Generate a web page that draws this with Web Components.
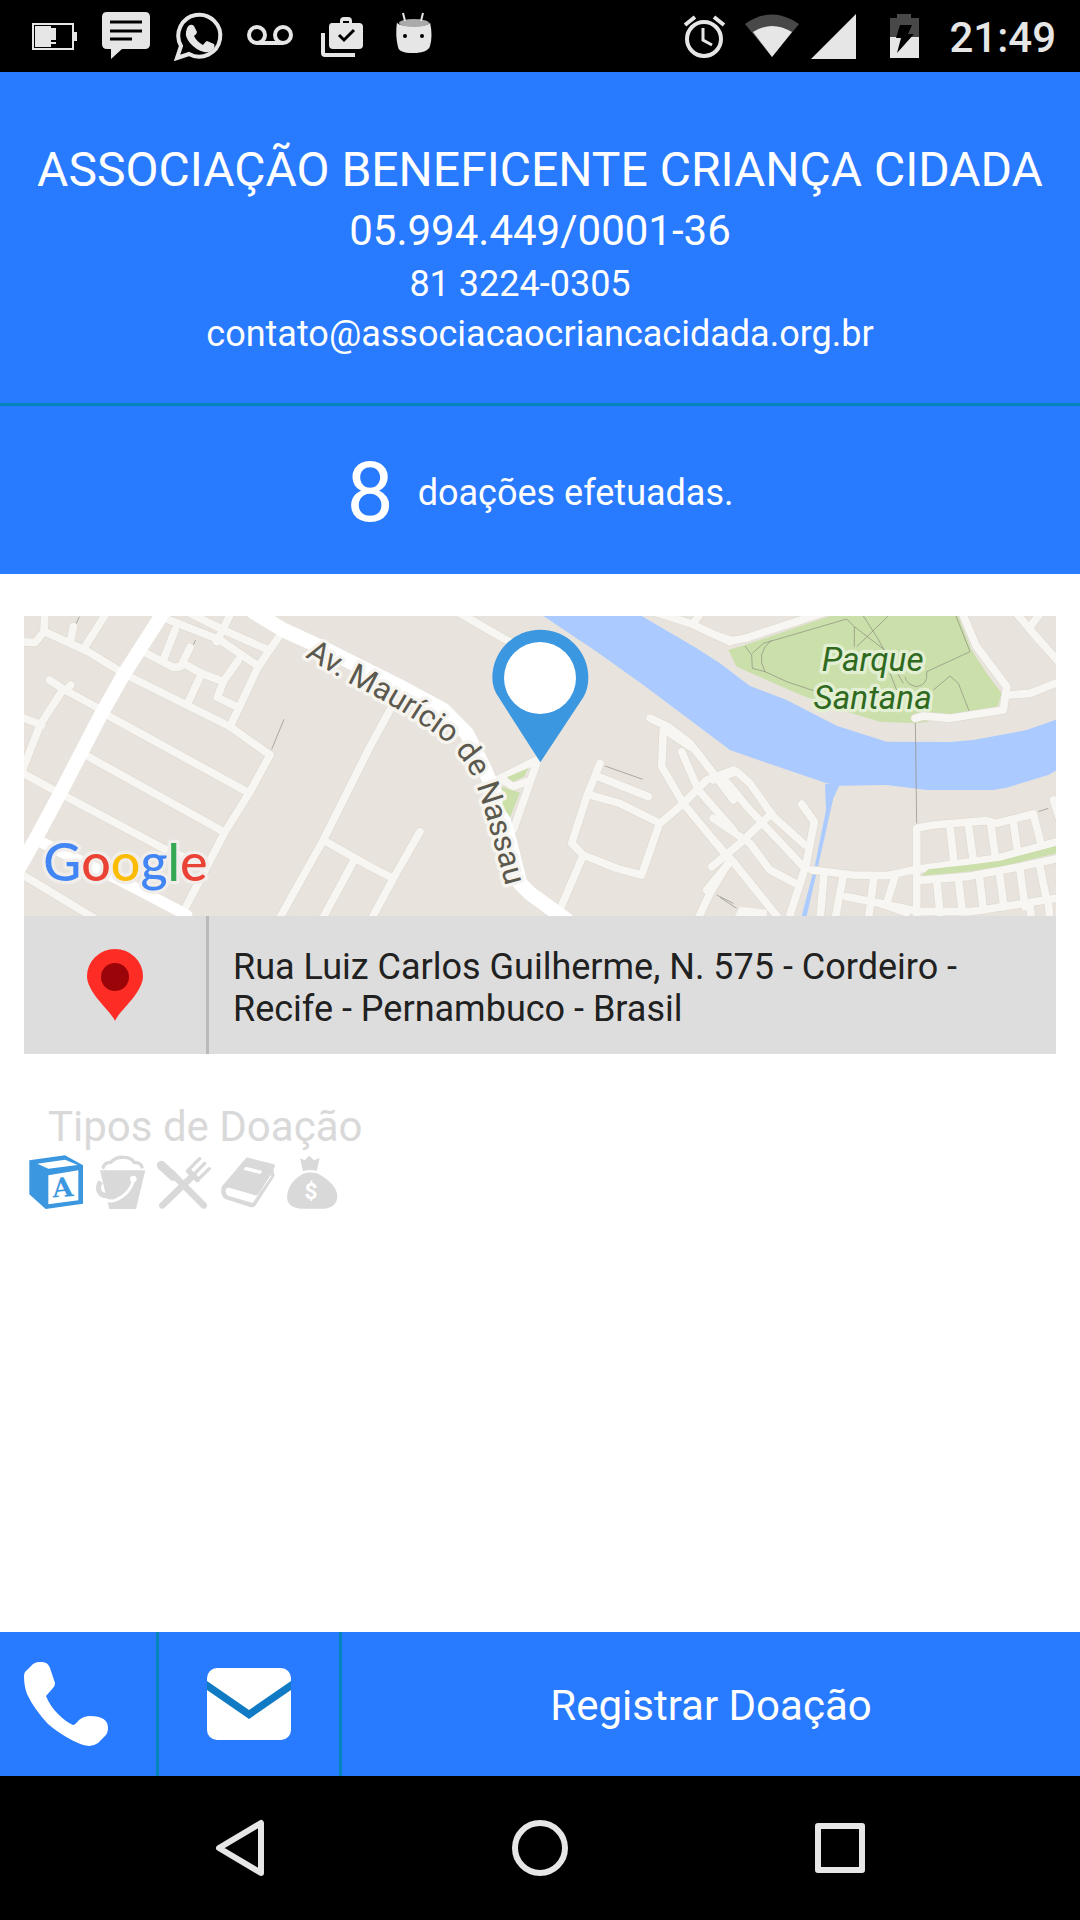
<!DOCTYPE html>
<html lang="pt-BR">
<head>
<meta charset="utf-8">
<meta name="viewport" content="width=device-width, initial-scale=1">
<title>Associação Beneficente Criança Cidada</title>
<style>
  :root {
    --blue: #287aff;
    --line: #0583bb;
    --accent: #3b97e0;
    --muted: #d9d9d9;
    --icon: #e6e6e6;
  }
  body {
    margin: 0;
    background: #fff;
    font-family: Roboto, sans-serif;
    font-size: 36px;
    line-height: 42px;
    color: #212121;
  }
</style>
</head>
<body>
<app-screen>
  <status-bar slot="top">21:49</status-bar>
  <org-header slot="top">
    <span slot="name">ASSOCIAÇÃO BENEFICENTE CRIANÇA CIDADA</span>
    <span slot="code">05.994.449/0001-36</span>
    <span slot="phone">81 3224-0305</span>
    <span slot="mail">contato@associacaocriancacidada.org.br</span>
  </org-header>
  <donation-count slot="top" value="8">doações efetuadas.</donation-count>
  <place-card>
    <place-map></place-map>
    <span slot="address">Rua Luiz Carlos Guilherme, N. 575 - Cordeiro - Recife - Pernambuco - Brasil</span>
  </place-card>
  <donation-types>Tipos de Doação</donation-types>
  <action-bar slot="bottom">Registrar Doação</action-bar>
  <nav-bar slot="bottom"></nav-bar>
</app-screen>

<script>
// every element here only needs a shadow root filled from a string
function define(name, html, setup) {
  const template = document.createElement('template');
  template.innerHTML = html;
  customElements.define(name, class extends HTMLElement {
    constructor() {
      super();
      this._shadowRoot = this.attachShadow({ mode: 'open' });
      this._shadowRoot.appendChild(template.content.cloneNode(true));
      if (setup) setup(this, this._shadowRoot);
    }
  });
}

define('app-screen', `
  <style>
    :host { display: flex; flex-direction: column; min-height: 100vh; }
    main { flex: 1; padding: 42px 24px; }
  </style>
  <slot name="top"></slot>
  <main><slot></slot></main>
  <slot name="bottom"></slot>
`);

define('status-bar', `
  <style>
    :host {
      display: flex;
      justify-content: space-between;
      height: 72px;
      padding: 0 24px 0 18px;
      background: #000;
      color: var(--icon);
    }
    div { display: flex; align-items: center; }
    svg { display: block; height: 72px; fill: var(--icon); }
    time { padding: 4px 0 0 8px; font-size: 42px; line-height: 48px; font-weight: 500; }
  </style>
  <div>
    <svg viewBox="0 0 72 72">
      <path d="M14 23h42v9h3v9h-3v9H14zM16 25v23h38V25z" fill-rule="evenodd"/>
      <path d="M17 26h16v2h5v12h-5v2h5v2h-5v3H17z"/>
    </svg>
    <svg viewBox="0 0 72 72">
      <path d="M17 12h38q5 0 5 5v27q0 5-5 5H32L21 59V49h-4q-5 0-5-5V17q0-5 5-5z"/>
      <path d="M20 22h32M20 31h32M20 39h22" stroke="#000" stroke-width="3"/>
    </svg>
    <svg viewBox="0 0 72 72">
      <path d="M15 58l4-12a21 21 0 1 1 8 8z" fill="none" stroke="#e6e6e6" stroke-width="4"/>
      <path d="M28 25q2-1 4 1l3 6q0 2-3 4 3 6 9 9 3-4 4-4l7 3q1 1 0 4-3 5-10 4-8-2-14-9-5-6-4-11 1-6 4-7z"/>
    </svg>
    <svg viewBox="0 0 72 72">
      <g fill="none" stroke="#e6e6e6" stroke-width="4">
        <circle cx="23" cy="35" r="8"/><circle cx="49" cy="35" r="8"/><path d="M23 43h26"/>
      </g>
    </svg>
    <svg viewBox="0 0 72 72">
      <path d="M26 23h8v-2q0-4 4-4h4q4 0 4 4v2h7q4 0 4 4v18q0 4-4 4H27q-4 0-4-4V27q0-4 3-4zM37 23h6v-2h-6z" fill-rule="evenodd"/>
      <path d="M15 33h4v20h30v4H19q-4 0-4-4z"/>
      <path d="M33 35l5 5 10-10" fill="none" stroke="#000" stroke-width="3"/>
    </svg>
    <svg viewBox="0 0 72 72">
      <path d="M19 22q0 4 17 4 16 0 16-4 3 14 0 24-2 7-17 7-14 0-15-6-3-12-1-25z"/>
      <ellipse cx="36" cy="23" rx="15" ry="4" fill="#aaa"/>
      <path d="M27 21l-2-8M43 21l2-8" stroke="#e6e6e6" stroke-width="2"/>
      <circle cx="27" cy="36" r="2" fill="#000"/><circle cx="44" cy="36" r="2" fill="#000"/>
    </svg>
  </div>
  <div>
    <svg viewBox="5 0 72 72">
      <g fill="none" stroke="#e6e6e6">
        <circle cx="36" cy="39" r="17" stroke-width="4"/>
        <path d="M35 28v12l9 5" stroke-width="3"/>
        <path d="M17 25l10-8M56 25l-10-8" stroke-width="4"/>
      </g>
    </svg>
    <svg viewBox="9 0 64 72">
      <path d="M9 24q27-19 54 0L36 57z" fill="#484848"/>
      <path d="M17 32q19-12 39 0L36 57z"/>
    </svg>
    <svg viewBox="0 0 60 72"><path d="M2 59L47 14v45z"/></svg>
    <svg viewBox="1 0 72 72">
      <path d="M22 18h7v-4h14v4h8v19H22z" fill="#484848"/>
      <path d="M22 37h29v21H22z"/>
      <path d="M32 25h12l-4 9h6L29 53l4-15h-5z" fill="#000"/>
    </svg>
    <time><slot></slot></time>
  </div>
`);

define('org-header', `
  <style>
    :host {
      display: flex;
      flex-direction: column;
      align-items: center;
      gap: 8px;
      padding: 70px 24px 48px;
      background: var(--blue);
      border-bottom: 3px solid var(--line);
      color: #fff;
    }
    h1 { margin: 0; font-size: 48px; line-height: 56px; font-weight: 400; white-space: nowrap; }
    .code { font-size: 42px; line-height: 49px; }
    /* room for a second number */
    .phone { padding-right: 40px; }
  </style>
  <h1><slot name="name"></slot></h1>
  <div class="code"><slot name="code"></slot></div>
  <div class="phone"><slot name="phone"></slot></div>
  <div><slot name="mail"></slot></div>
`);

define('donation-count', `
  <style>
    :host {
      display: flex;
      justify-content: center;
      align-items: center;
      gap: 24px;
      padding: 38px 24px 32px;
      background: var(--blue);
      color: #fff;
    }
    b { font-size: 84px; line-height: 98px; font-weight: 400; }
  </style>
  <b></b><span><slot></slot></span>
`, (host, root) => {
  root.querySelector('b').textContent = host.getAttribute('value');
});

define('place-card', `
  <style>
    :host { display: block; background: #ddd; }
    .row { display: flex; min-height: 138px; }
    .pin { flex: none; display: grid; place-items: center; width: 182px; border-right: 3px solid #bababa; }
    .pin svg { width: 56px; height: 72px; }
    .address { flex: 1; align-self: center; padding: 30px 24px 24px; }
  </style>
  <slot></slot>
  <div class="row">
    <div class="pin">
      <svg viewBox="0 0 56 72">
        <path d="M28 72C24 62 0 44 0 27a28 27 0 0 1 56 0C56 44 32 62 28 72z" fill="#fd2c24"/>
        <circle cx="28" cy="28" r="14" fill="#9b0509"/>
      </svg>
    </div>
    <div class="address"><slot name="address"></slot></div>
  </div>
`);

define('place-map', `
  <style>
    :host { display: block; height: 300px; }
    svg { display: block; width: 100%; height: 100%; font-family: Roboto, sans-serif; }
    .water { fill: #abcaff; }
    .park { fill: #cadfaa; }
    .path { fill: none; stroke: #8b8a7c; stroke-width: 2; }
    .roads { fill: none; stroke-linecap: round; stroke-linejoin: round; }
    .edge { stroke: #dedad1; stroke-width: 27; }
    .minor { stroke: #f8f6f2; stroke-width: 23; }
    .major { stroke: #fff; }
    .label { paint-order: stroke; stroke-linejoin: round; stroke-width: 20; }
  </style>
  <svg viewBox="12 18 3096 900" preserveAspectRatio="xMidYMid slice" role="img" aria-label="Mapa">
    <defs>
      <g id="streets">
        <path d="M0 95L45 98L72 65L75 0M75 65L205 125L310 190L340 205L630 350L750 435L690 545L615 665L490 905M160 50L152 90M195 110L265 0"/>
        <path d="M88 210L135 240L245 300L270 320L680 545M152 225L140 240M125 245L60 345L0 500M0 320L65 345M0 485L110 545L430 715L560 770M205 440L610 665M0 790L240 935"/>
        <path d="M630 350L715 170L790 60M435 25L600 90L710 165M500 5L610 60L745 120M635 5L590 95M380 130L460 172L482 170L510 112M465 60L432 145M490 160L545 190L610 215L655 150M610 215L592 262L640 285M545 190L503 280"/>
        <path d="M1110 300L1050 410L910 690L770 940M910 690L1050 770L1120 805M1000 755L900 940M1200 665L1120 805L1050 935"/>
        <g transform="translate(1050 0)">
          <path d="M270 10L400 85L450 110M380 510L500 450M500 460L430 660M390 505L430 530L470 515"/>
          <path d="M690 460L650 560L605 700L640 735L740 775L815 795L865 650M685 500L835 560M660 555L750 580L870 640L940 580L1010 510L1090 480M640 735L565 910"/>
          <path d="M840 325L895 350L960 400L1030 490L1090 570M880 360L875 470L940 580L1080 750L1020 850L980 935M935 425L985 540L1090 660M900 370L960 410"/>
          <path d="M850 5L960 40L1080 95M970 40L995 5"/>
        </g>
        <g transform="translate(2100 0)">
          <path d="M0 80L35 92L75 85L320 5M725 5L770 110L860 230L850 300L690 325L610 318L585 325M865 255L930 250L1020 215M885 5L940 70L1020 160M930 50L965 5"/>
          <path d="M-20 510L50 485L90 520L160 620L255 705M10 505L90 600L245 765M-20 625L90 700L150 780L230 822M-25 770L60 700L155 610M-20 690L35 750L180 930M35 750L-40 840"/>
          <path d="M245 582L283 635L258 765L205 930M275 780L400 795L500 797L590 778L830 745L1030 690M590 925L590 655L640 645L800 632L830 640L940 612L960 690M1000 570L1030 660"/>
          <path d="M690 650L702 760M745 645L760 750M812 640L826 740M880 635L892 720M590 812L740 800L900 770L1030 742M480 880L600 905L750 905L1030 862"/>
          <path d="M650 810L660 910M715 805L727 905M778 800L790 900M838 790L852 890M900 780L915 890M960 770L980 870M312 790L300 930M370 795L345 930M380 860L480 880L560 908M462 800L445 930M525 800L500 880M930 890L935 930M985 880L990 930"/>
        </g>
      </g>
      <path id="avenue" d="M854 140L985 218Q1150 299 1276 394Q1342 452 1370 530Q1396 600 1466 860"/>
    </defs>
    <path d="M0 0h3120v930H0z" fill="#e8e4dd"/>
    <path class="water" d="M1570 18L1730 125L1870 225L2010 330L2130 420L2230 455L2420 520L2460 527L2600 525L2720 540L2920 540L2960 533L3085 495L3120 475V325L3020 360L2860 390L2790 396L2600 395L2450 347L2300 270L2190 228L2100 160L2030 115L1865 18z"/>
    <path class="water" d="M2415 522H2460L2440 565L2395 765L2360 918H2345L2385 765L2418 600z"/>
    <path class="park" d="M2125 120L2175 105L2430 18H2815L2855 120L2900 190L2945 250L2930 300L2790 325L2690 340L2580 335L2480 305L2350 258L2240 210L2150 170z"/>
    <g transform="translate(2100 0)" class="path">
      <path d="M75 108L95 135L97 175L135 185L200 215L290 245M97 130L130 100L250 65L380 27L403 50L520 140M403 50V110M430 18L470 80L550 220M505 18L410 110M708 18L750 125L620 185Q625 225 590 230Q560 225 555 200M640 240L690 198L715 220L748 305M155 90Q105 130 135 185M510 190L530 240"/>
      <path d="M586 330L590 640M955 605L985 595M0 862L50 895"/>
    </g>
    <path class="path" d="M178 20L168 42M527 90L518 108M792 328L755 418M1755 468L1868 508M2090 855L2140 880"/>
    <g class="roads">
      <use href="#streets" class="edge"/>
      <use href="#streets" class="minor"/>
      <g class="major">
        <path d="M435 0L310 195L245 310L115 560L45 690L0 770" stroke-width="42"/>
        <path d="M50 690L300 810L500 915" stroke-width="34"/>
        <path d="M700 5L790 60L900 110L1010 165L1150 235L1270 300L1340 370L1390 470L1430 560L1470 700L1500 820L1530 850L1640 930" stroke-width="44"/>
      </g>
    </g>
    <path d="M2145 918L2160 890L2240 900V918z" fill="#f8f6f2"/>
    <path class="park" d="M1460 502L1525 474L1512 500L1480 515zM1445 530L1500 548L1470 622L1448 590zM2705 797L2725 778L2840 765L2940 752L3108 708V730L2950 768L2840 785z"/>
    <g font-size="93" fill="#5b584e">
      <text class="label" stroke="#f6f4ef"><textPath href="#avenue">Av. Maurício de Nassau</textPath></text>
    </g>
    <g font-size="100" font-style="italic" fill="#2f6a1f" text-anchor="middle">
      <text class="label" x="2558" y="182" stroke="#e3efd2">Parque</text>
      <text class="label" x="2558" y="298" stroke="#e3efd2">Santana</text>
    </g>
    <path d="M1561 457L1436 262Q1417 235 1417 203A144 144 0 0 1 1705 203Q1705 235 1690 262z" fill="#3b97e0"/>
    <circle cx="1560" cy="204" r="108" fill="#fff"/>
    <text class="label" x="70" y="814" font-family="Lato, sans-serif" font-size="156" font-weight="500" stroke="#f0edea" stroke-width="30"><tspan fill="#4285f4">G</tspan><tspan fill="#ea4335">o</tspan><tspan fill="#fbbc05">o</tspan><tspan fill="#4285f4">g</tspan><tspan fill="#34a853">l</tspan><tspan fill="#ea4335">e</tspan></text>
  </svg>
`);

define('donation-types', `
  <style>
    :host { display: block; padding: 48px 0 0 5px; color: var(--muted); }
    h2 { margin: 0; padding-left: 19px; font-size: 42px; line-height: 49px; font-weight: 400; }
    div { display: flex; gap: 10px; padding-top: 4px; }
    svg { width: 54px; height: 54px; fill: var(--muted); }
    .on { fill: var(--accent); }
  </style>
  <h2><slot></slot></h2>
  <div>
    <svg class="on" viewBox="87 224 162 162" role="img" aria-label="Brinquedos">
      <path d="M88 240L195 225L249 255V370L137 386L88 342z"/>
      <path d="M112 250L195 238L233 254L145 265zM145 285L235 270V360L145 372z" fill="#fff"/>
      <text x="190" y="349" transform="rotate(-4 190 349)" text-anchor="middle" font-family="DejaVu Serif, serif" font-weight="700" font-size="80">A</text>
    </svg>
    <svg viewBox="279 224 162 162" role="img" aria-label="Limpeza">
      <path d="M310 261Q314 245 333 246Q346 229 372 231Q394 231 402 246Q422 246 426 260" fill="none" stroke="#d9d9d9" stroke-width="10" stroke-linecap="round"/>
      <path d="M300 270H436L408 386H328z"/>
      <path d="M400 298Q392 340 345 360Q325 366 305 352" fill="none" stroke="#fff" stroke-width="9"/>
      <circle cx="400" cy="296" r="10" fill="#fff"/>
      <path d="M302 304Q288 325 303 341Q325 354 358 336" fill="none" stroke="#d9d9d9" stroke-width="15"/>
    </svg>
    <svg viewBox="471 224 162 162" role="img" aria-label="Alimentos">
      <g fill="none" stroke="#d9d9d9" stroke-linecap="round">
        <path d="M484 255L520 288" stroke-width="27"/>
        <path d="M515 278L611 375M487 375L580 285" stroke-width="20"/>
        <path d="M599 235L566 268M614 249L584 280M628 265L596 296" stroke-width="10"/>
        <path d="M566 272L592 298" stroke-width="16"/>
      </g>
    </svg>
    <svg viewBox="663 224 162 162" role="img" aria-label="Livros">
      <path d="M740 231L822 252Q827 255 823 262L820 268Q822 278 824 286L766 376Q760 384 750 380L678 357Q658 346 666 318z"/>
      <path d="M678 326Q682 320 690 323L766 345Q772 346 776 340L812 284L814 288L758 368L684 346Q674 338 678 326zM737 259L787 272L781 281L730 268z" fill="#fff"/>
    </svg>
    <svg viewBox="855 224 162 162" role="img" aria-label="Dinheiro">
      <path d="M900 234L914 240L928 226L942 240L959 233L950 272Q930 266 909 273zM912 279Q930 274 952 279Q1012 312 1012 350Q1008 384 970 385H903Q862 382 861 350Q864 305 912 279z"/>
      <text x="933" y="355" text-anchor="middle" font-weight="700" font-size="68" fill="#fff">$</text>
    </svg>
  </div>
`);

define('action-bar', `
  <style>
    :host { display: flex; height: 144px; background: var(--blue); }
    a, button {
      display: flex;
      align-items: center;
      border: 0;
      background: none;
      color: #fff;
    }
    a { padding: 0 48px; border-right: 3px solid var(--line); }
    .call { padding-left: 24px; }
    button { flex: 1; justify-content: center; padding: 2px 0 0; font: inherit; font-size: 42px; line-height: 49px; }
    svg { width: 84px; height: 84px; fill: #fff; }
  </style>
  <a class="call" href="tel:8132240305" aria-label="Ligar">
    <svg viewBox="0 0 84 84">
      <path d="M0 14Q0 10 3 8L9 2Q12 0 15 0H18Q24 0 26 6L31 21Q31 24 29 26L22 34Q26 44 34 52Q42 60 49 63Q51 63 55 58Q60 54 66 54Q84 54 84 66Q84 71 81 74L74 81Q70 84 65 84Q56 83 44 76Q32 69 24 62Q10 47 3 32Q0 24 0 14z"/>
    </svg>
  </a>
  <a href="mailto:contato@associacaocriancacidada.org.br" aria-label="Enviar e-mail">
    <svg viewBox="0 -6 84 84">
      <rect width="84" height="72" rx="10"/>
      <path d="M0 13L42 42L84 13V22L42 51L0 22z" fill="#107bc4"/>
    </svg>
  </a>
  <button type="button"><slot></slot></button>
`);

define('nav-bar', `
  <style>
    :host {
      display: grid;
      grid-template-columns: repeat(3, 1fr);
      height: 144px;
      padding: 0 90px;
      background: #000;
    }
    button { display: grid; place-items: center; padding: 0; border: 0; background: none; }
    svg { width: 60px; height: 60px; fill: none; stroke: var(--icon); stroke-width: 6; stroke-linejoin: round; }
  </style>
  <button type="button" aria-label="Voltar"><svg viewBox="0 0 60 60"><path d="M51 5V55L9 30z"/></svg></button>
  <button type="button" aria-label="Início"><svg viewBox="0 0 60 60"><circle cx="30" cy="30" r="25"/></svg></button>
  <button type="button" aria-label="Recentes"><svg viewBox="0 0 60 60"><path d="M8 8h44v44H8z"/></svg></button>
`);
</script>
</body>
</html>
